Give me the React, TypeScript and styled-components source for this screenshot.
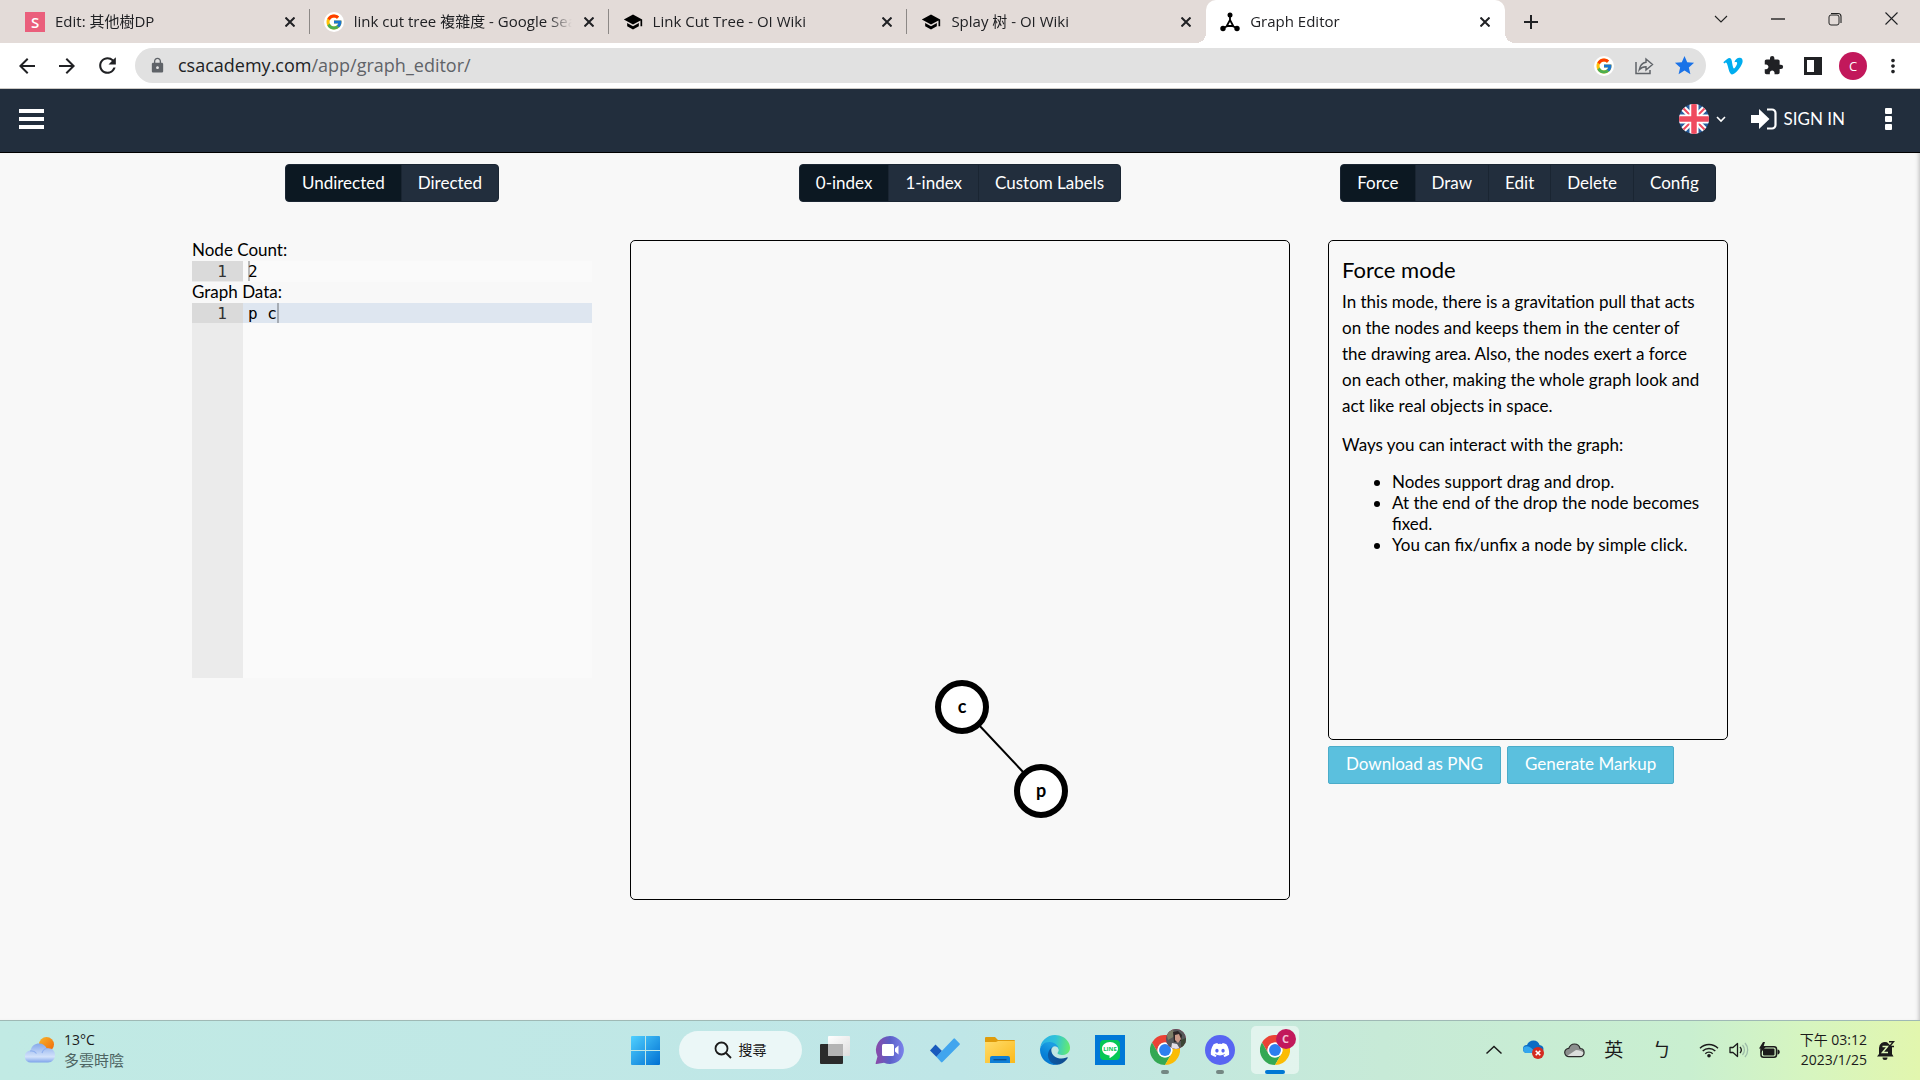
import React, { useState } from 'react'
import styled, { createGlobalStyle, css } from 'styled-components'
import { FaDiscord, FaVimeoV } from 'react-icons/fa'
import { FcGoogle } from 'react-icons/fc'
import {
  MdArrowBack,
  MdArrowForward,
  MdExtension,
  MdLock,
  MdMoreVert,
  MdRefresh,
  MdSchool,
  MdStar,
} from 'react-icons/md'

type Tab = {
  id: string
  title: string
  icon: React.ReactNode
}

type GraphNode = {
  label: string
  x: number
  y: number
}

const TABS: Tab[] = [
  { id: 'edit', title: 'Edit: 其他樹DP', icon: <LetterIcon>S</LetterIcon> },
  {
    id: 'search',
    title: 'link cut tree 複雜度 - Google Search',
    icon: <GoogleIcon />,
  },
  {
    id: 'lct',
    title: 'Link Cut Tree - OI Wiki',
    icon: <MdSchool size={20} color="#000" />,
  },
  {
    id: 'splay',
    title: 'Splay 树 - OI Wiki',
    icon: <MdSchool size={20} color="#000" />,
  },
  { id: 'graph', title: 'Graph Editor', icon: <GraphIcon /> },
]

const NODES: GraphNode[] = [
  { label: 'c', x: 331, y: 466 },
  { label: 'p', x: 410, y: 550 },
]

const DIRECTIONS = ['Undirected', 'Directed']
const LABELS = ['0-index', '1-index', 'Custom Labels']
const MODES = ['Force', 'Draw', 'Edit', 'Delete', 'Config']

export default function App() {
  return (
    <Page>
      <GlobalStyle />
      <TabStrip />
      <AddressBar />
      <SiteHeader />
      <GraphEditor />
      <Taskbar />
    </Page>
  )
}

function TabStrip() {
  const [activeTab, setActiveTab] = useState('graph')
  const activeIndex = TABS.findIndex(tab => tab.id === activeTab)

  return (
    <Strip>
      <TabList>
        {TABS.map((tab, index) => (
          <TabItem
            key={tab.id}
            $active={tab.id === activeTab}
            $divider={index !== activeIndex && index + 1 !== activeIndex}
          >
            <TabButton type="button" onClick={() => setActiveTab(tab.id)}>
              <Favicon>{tab.icon}</Favicon>
              <TabTitle>{tab.title}</TabTitle>
            </TabButton>
            <TabClose type="button" aria-label={`Close ${tab.title}`}>
              <CrossIcon size={10} width={2} />
            </TabClose>
          </TabItem>
        ))}
      </TabList>
      <NewTab type="button" aria-label="New tab">
        <svg width="16" height="16" viewBox="0 0 16 16">
          <path d="M8 1v14M1 8h14" stroke="#202124" strokeWidth="2" />
        </svg>
      </NewTab>
      <WindowControls>
        <WindowButton type="button" aria-label="Search tabs">
          <svg width="14" height="8" viewBox="0 0 14 8" fill="none">
            <path d="M1 1l6 6 6-6" stroke="#222" strokeWidth="1.1" />
          </svg>
        </WindowButton>
        <WindowButton type="button" aria-label="Minimize">
          <svg width="14" height="2" viewBox="0 0 14 2">
            <path d="M0 1h14" stroke="#222" strokeWidth="1.4" />
          </svg>
        </WindowButton>
        <WindowButton type="button" aria-label="Restore">
          <svg width="14" height="14" viewBox="0 0 14 14" fill="none">
            <rect x="1" y="3" width="10" height="10" rx="2" stroke="#222" />
            <path
              d="M3 1.5h7a3 3 0 0 1 3 3V11"
              stroke="#222"
              strokeWidth="1.1"
            />
          </svg>
        </WindowButton>
        <WindowButton type="button" aria-label="Close window">
          <CrossIcon size={13} width={1.1} />
        </WindowButton>
      </WindowControls>
    </Strip>
  )
}

function AddressBar() {
  return (
    <Toolbar>
      <NavButtons>
        <IconButton type="button" aria-label="Back">
          <MdArrowBack size={24} />
        </IconButton>
        <IconButton type="button" aria-label="Forward">
          <MdArrowForward size={24} />
        </IconButton>
        <IconButton type="button" aria-label="Reload">
          <MdRefresh size={25} />
        </IconButton>
      </NavButtons>
      <UrlField>
        <MdLock size={17} color="#5f6368" />
        <Url href="#graph_editor">
          csacademy.com<UrlPath>/app/graph_editor/</UrlPath>
        </Url>
        <UrlActions>
          <IconButton type="button" aria-label="Search with Google">
            <GoogleIcon />
          </IconButton>
          <IconButton type="button" aria-label="Share">
            <svg width="20" height="20" viewBox="0 0 20 20" fill="none">
              <path d="M2 6v11.5h14V14" stroke="#5f6368" strokeWidth="1.5" />
              <path
                d="M12 3l6.5 5.5L12 14v-3.200c-3 0-5 .9-6.800 3C6 9.500 8.300 6.900 12 6.300z"
                stroke="#5f6368"
                strokeWidth="1.4"
              />
            </svg>
          </IconButton>
          <IconButton type="button" aria-label="Bookmark">
            <MdStar size={23} color="#1a73e8" />
          </IconButton>
        </UrlActions>
      </UrlField>
      <Extensions>
        <IconButton type="button" aria-label="Vimeo">
          <FaVimeoV size={22} color="#00adef" />
        </IconButton>
        <IconButton type="button" aria-label="Extensions">
          <MdExtension size={21} />
        </IconButton>
        <IconButton type="button" aria-label="Side panel">
          <svg width="18" height="18" viewBox="0 0 18 18">
            <path fill="#202124" d="M0 0h18v18H0zM3 3v12h7V3z" />
          </svg>
        </IconButton>
        <Avatar type="button">C</Avatar>
        <IconButton type="button" aria-label="Browser menu">
          <MdMoreVert size={22} />
        </IconButton>
      </Extensions>
    </Toolbar>
  )
}

function SiteHeader() {
  return (
    <Header>
      <HeaderButton type="button" aria-label="Menu">
        <svg width="25" height="20" viewBox="0 0 25 20">
          <path fill="#fff" d="M0 0h25v4H0zM0 8h25v4H0zM0 16h25v4H0z" />
        </svg>
      </HeaderButton>
      <HeaderActions>
        <HeaderButton type="button" aria-label="Language">
          <FlagIcon />
          <svg width="10" height="7" viewBox="0 0 10 7" fill="none">
            <path d="M1 1l4 4 4-4" stroke="#fff" strokeWidth="1.6" />
          </svg>
        </HeaderButton>
        <HeaderButton type="button">
          <svg width="26" height="22" viewBox="0 0 26 22">
            <path fill="#fff" d="M0 7h8V1l10.500 10L8 21v-6H0z" />
            <path
              d="M16 1.500h5a3.500 3.500 0 0 1 3.500 3.500v12a3.500 3.500 0 0 1-3.500 3.500h-5"
              fill="none"
              stroke="#fff"
              strokeWidth="2.2"
            />
          </svg>
          <SignIn>SIGN IN</SignIn>
        </HeaderButton>
        <MoreButton type="button" aria-label="More">
          <svg width="7" height="22" viewBox="0 0 7 22" fill="#fff">
            <rect width="7" height="6" rx="1" />
            <rect y="8" width="7" height="6" rx="1" />
            <rect y="16" width="7" height="6" rx="1" />
          </svg>
        </MoreButton>
      </HeaderActions>
    </Header>
  )
}

function GraphEditor() {
  const [nodeCount, setNodeCount] = useState('2')
  const [graphData, setGraphData] = useState('p c')
  const [from, to] = NODES

  return (
    <Main>
      <Columns>
        <ToggleGroup options={DIRECTIONS} />
        <ToggleGroup options={LABELS} />
        <ToggleGroup options={MODES} />

        <section>
          <EditorLabel htmlFor="node-count">Node Count:</EditorLabel>
          <Editor>
            <Gutter>
              <LineNumber>1</LineNumber>
            </Gutter>
            <Lines>
              <CodeInput
                id="node-count"
                rows={1}
                value={nodeCount}
                onChange={event => setNodeCount(event.target.value)}
              />
              <Caret $column={0} />
            </Lines>
          </Editor>
          <EditorLabel htmlFor="graph-data">Graph Data:</EditorLabel>
          <Editor $tall>
            <Gutter>
              <LineNumber>1</LineNumber>
            </Gutter>
            <Lines $focused>
              <CodeInput
                id="graph-data"
                value={graphData}
                onChange={event => setGraphData(event.target.value)}
              />
              <Caret $column={3} />
            </Lines>
          </Editor>
        </section>

        <Canvas viewBox="0 0 658 658">
          <line
            x1={from.x}
            y1={from.y}
            x2={to.x}
            y2={to.y}
            stroke="#000"
            strokeWidth="2"
          />
          {NODES.map(node => (
            <g key={node.label}>
              <circle
                cx={node.x}
                cy={node.y}
                r="24"
                fill="#fff"
                stroke="#000"
                strokeWidth="6"
              />
              <NodeLabel x={node.x} y={node.y + 6}>
                {node.label}
              </NodeLabel>
            </g>
          ))}
        </Canvas>

        <section>
          <HelpPanel>
            <HelpTitle>Force mode</HelpTitle>
            <HelpText>
              In this mode, there is a gravitation pull that acts on the nodes
              and keeps them in the center of the drawing area. Also, the nodes
              exert a force on each other, making the whole graph look and act
              like real objects in space.
            </HelpText>
            <HelpText>Ways you can interact with the graph:</HelpText>
            <HelpList>
              <li>Nodes support drag and drop.</li>
              <li>At the end of the drop the node becomes fixed.</li>
              <li>You can fix/unfix a node by simple click.</li>
            </HelpList>
          </HelpPanel>
          <Actions>
            <ActionButton type="button">Download as PNG</ActionButton>
            <ActionButton type="button">Generate Markup</ActionButton>
          </Actions>
        </section>
      </Columns>
    </Main>
  )
}

function ToggleGroup({ options }: { options: string[] }) {
  const [selected, setSelected] = useState(options[0])

  return (
    <Toggle>
      {options.map(option => (
        <ToggleButton
          key={option}
          type="button"
          $active={option === selected}
          onClick={() => setSelected(option)}
        >
          {option}
        </ToggleButton>
      ))}
    </Toggle>
  )
}

function Taskbar() {
  return (
    <Bar>
      <Weather type="button">
        <WeatherIcon />
        <WeatherText>
          <span>13°C</span>
          <Muted>多雲時陰</Muted>
        </WeatherText>
      </Weather>
      <Apps>
        <AppTile type="button" aria-label="Start">
          <WindowsIcon />
        </AppTile>
        <SearchButton type="button">
          <svg width="18" height="18" viewBox="0 0 18 18" fill="none">
            <circle cx="7.5" cy="7.5" r="6" stroke="#1b1b1b" strokeWidth="1.8" />
            <path d="M12 12l5 5" stroke="#1b1b1b" strokeWidth="1.8" />
          </svg>
          搜尋
        </SearchButton>
        <AppTile type="button" aria-label="Task view">
          <TaskViewIcon />
        </AppTile>
        <AppTile type="button" aria-label="Chat">
          <ChatIcon />
        </AppTile>
        <AppTile type="button" aria-label="To Do">
          <TodoIcon />
        </AppTile>
        <AppTile type="button" aria-label="File Explorer">
          <FolderIcon />
        </AppTile>
        <AppTile type="button" aria-label="Edge">
          <EdgeIcon />
        </AppTile>
        <AppTile type="button" aria-label="LINE">
          <LineIcon />
        </AppTile>
        <AppTile type="button" aria-label="Chrome" $running>
          <ChromeIcon />
          <ProfileBadge>
            <PhotoIcon />
          </ProfileBadge>
        </AppTile>
        <AppTile type="button" aria-label="Discord" $running>
          <DiscordCircle>
            <FaDiscord size={20} color="#fff" />
          </DiscordCircle>
        </AppTile>
        <AppTile type="button" aria-label="Chrome, Graph Editor" $active>
          <ChromeIcon />
          <ProfileBadge>C</ProfileBadge>
        </AppTile>
      </Apps>
      <Tray>
        <TrayButton type="button" aria-label="Hidden icons" $width={38}>
          <svg width="18" height="10" viewBox="0 0 18 10" fill="none">
            <path
              d="M1.500 8.500L9 1.500l7.500 7"
              stroke="#1b1b1b"
              strokeWidth="1.5"
            />
          </svg>
        </TrayButton>
        <TrayButton type="button" aria-label="OneDrive" $width={42}>
          <OneDriveIcon />
        </TrayButton>
        <TrayButton type="button" aria-label="Cloud" $width={40}>
          <CloudIcon />
        </TrayButton>
        <TrayButton type="button" $width={38}>
          英
        </TrayButton>
        <TrayButton type="button" $width={58}>
          ㄅ
        </TrayButton>
        <StatusButton type="button" aria-label="Network, sound and battery">
          <WifiIcon />
          <VolumeIcon />
          <BatteryIcon />
        </StatusButton>
        <Clock type="button">
          <span>下午 03:12</span>
          <span>2023/1/25</span>
        </Clock>
        <TrayButton type="button" aria-label="Notifications" $width={38}>
          <BellIcon />
        </TrayButton>
      </Tray>
    </Bar>
  )
}

function CrossIcon({ size, width }: { size: number; width: number }) {
  return (
    <svg width={size} height={size} viewBox={`0 0 ${size} ${size}`}>
      <path
        d={`M0.5 0.5L${size - 0.5} ${size - 0.5}M${size - 0.5} 0.5L0.5 ${size - 0.5}`}
        stroke="#202124"
        strokeWidth={width}
      />
    </svg>
  )
}

function GraphIcon() {
  return (
    <svg width="20" height="20" viewBox="0 0 20 20">
      <path
        d="M10 3v5L6.500 14.500M10 8l3.500 6.500M3 16l5-2h4l5 2"
        fill="none"
        stroke="#000"
        strokeWidth="1.8"
      />
      <circle cx="10" cy="3" r="2.5" />
      <circle cx="3" cy="16.5" r="2.7" />
      <circle cx="17" cy="16.5" r="2.7" />
    </svg>
  )
}

function GoogleIcon() {
  return (
    <GoogleCircle>
      <FcGoogle size={18} />
    </GoogleCircle>
  )
}

function LetterIcon({ children }: { children: string }) {
  return <LetterSquare>{children}</LetterSquare>
}

function FlagIcon() {
  return (
    <svg width="30" height="30" viewBox="0 0 30 30">
      <clipPath id="flag">
        <circle cx="15" cy="15" r="15" />
      </clipPath>
      <g clipPath="url(#flag)">
        <path fill="#2a5f9e" d="M0 0h30v30H0z" />
        <path d="M0 0l30 30M30 0L0 30" stroke="#fff" strokeWidth="6" />
        <path d="M0 0l30 30M30 0L0 30" stroke="#ef4b5f" strokeWidth="2" />
        <path d="M15 0v30M0 15h30" stroke="#fff" strokeWidth="9" />
        <path d="M15 0v30M0 15h30" stroke="#ef4b5f" strokeWidth="5.5" />
      </g>
    </svg>
  )
}

function WeatherIcon() {
  return (
    <svg width="30" height="26" viewBox="0 0 30 26">
      <defs>
        <linearGradient id="sun" x1="0" y1="0" x2="1" y2="1">
          <stop offset="0" stopColor="#f7b52c" />
          <stop offset="1" stopColor="#f0660a" />
        </linearGradient>
        <linearGradient id="cloud" x1="0" y1="0" x2="0" y2="1">
          <stop offset="0" stopColor="#86a9ea" />
          <stop offset="0.7" stopColor="#d3e2fb" />
          <stop offset="1" stopColor="#7da3ea" />
        </linearGradient>
      </defs>
      <circle cx="21.5" cy="7.5" r="7.5" fill="url(#sun)" />
      <path
        d="M6 25.500a6 6 0 0 1-.5-12C6.500 9 10 6.500 14 6.500c4 0 6.500 2 7.700 5 4.800-1 8.300 2.200 8.300 6.500s-3 7.500-7 7.500z"
        fill="url(#cloud)"
      />
      <path
        d="M17 16c1-3.200 3-4.500 5.500-4.500M5 14c3-.5 5 .5 6.500 2.500"
        fill="none"
        stroke="#8fb0ee"
        strokeWidth="1.2"
      />
    </svg>
  )
}

function WindowsIcon() {
  return (
    <svg width="29" height="29" viewBox="0 0 29 29">
      <defs>
        <linearGradient id="win" x1="0" y1="0" x2="1" y2="1">
          <stop offset="0" stopColor="#50d0ff" />
          <stop offset="1" stopColor="#0070d2" />
        </linearGradient>
      </defs>
      <path
        fill="url(#win)"
        d="M1 0h13v14H0V1a1 1 0 0 1 1-1zM15 0h13a1 1 0 0 1 1 1v13H15zM0 15h14v14H1a1 1 0 0 1-1-1zM15 15h14v13a1 1 0 0 1-1 1H15z"
      />
    </svg>
  )
}

function TaskViewIcon() {
  return (
    <svg width="30" height="28" viewBox="0 0 30 28">
      <defs>
        <linearGradient id="paper" x1="0" y1="0" x2="1" y2="1">
          <stop offset="0" stopColor="#fff" />
          <stop offset="1" stopColor="#dedede" />
        </linearGradient>
      </defs>
      <rect y="8" width="23" height="20" rx="1" fill="#2b2b2b" />
      <rect x="8" width="22" height="20" rx="1" fill="url(#paper)" />
      <path fill="#b4b4b4" d="M8 8h15v12H8z" />
    </svg>
  )
}

function ChatIcon() {
  return (
    <svg width="30" height="30" viewBox="0 0 30 30">
      <defs>
        <linearGradient id="chat" x1="0" y1="0" x2="1" y2="0">
          <stop offset="0" stopColor="#8b4aa8" />
          <stop offset="0.5" stopColor="#5b5fc7" />
          <stop offset="1" stopColor="#7b83eb" />
        </linearGradient>
      </defs>
      <path
        fill="url(#chat)"
        d="M15 1a14 14 0 1 1-6 26.700L1.500 29c-.8.100-1-.3-.8-1l1.800-6.500A14 14 0 0 1 15 1z"
      />
      <rect x="7" y="9" width="12" height="12" rx="1.5" fill="#fff" />
      <path fill="#fff" d="M20 13.500l3.500-3v9l-3.500-3z" />
    </svg>
  )
}

function TodoIcon() {
  return (
    <svg width="30" height="25" viewBox="0 0 30 25">
      <path fill="#185abd" d="M0 12.500l5.500-6L12 13l-5.500 6z" />
      <path
        fill="#41a5ee"
        d="M6.300 18.800L23.500.8a1 1 0 0 1 1.500 0l4.600 4.600a1 1 0 0 1 0 1.400L12.500 24a1 1 0 0 1-1.500 0z"
      />
    </svg>
  )
}

function FolderIcon() {
  return (
    <svg width="30" height="26" viewBox="0 0 30 26">
      <defs>
        <linearGradient id="folder" x1="0" y1="0" x2="1" y2="1">
          <stop offset="0" stopColor="#ffdc6b" />
          <stop offset="1" stopColor="#fbb91a" />
        </linearGradient>
      </defs>
      <path
        fill="#df9c0c"
        d="M0 6V1a1 1 0 0 1 1-1h9l3 3h16a1 1 0 0 1 1 1v2z"
      />
      <path fill="url(#folder)" d="M0 5h11l2-1h17v22H0z" />
      <path fill="#0f7fd6" d="M5 26v-5a2 2 0 0 1 2-2h16a2 2 0 0 1 2 2v5z" />
      <path d="M8.500 22.700h13" stroke="#0b4f8f" strokeWidth="1.3" />
    </svg>
  )
}

function EdgeIcon() {
  return (
    <svg width="30" height="30" viewBox="0 0 256 256">
      <defs>
        <linearGradient id="edge-dark" x1="0.2" y1="0.5" x2="1" y2="0.5">
          <stop offset="0" stopColor="#0c59a4" />
          <stop offset="1" stopColor="#114a8b" />
        </linearGradient>
        <linearGradient id="edge-blue" x1="0.6" y1="0.2" x2="0.2" y2="1">
          <stop offset="0" stopColor="#1b9de2" />
          <stop offset="0.5" stopColor="#0883d9" />
          <stop offset="1" stopColor="#0672cb" />
        </linearGradient>
        <linearGradient id="edge-green" x1="0" y1="0.4" x2="1" y2="0.5">
          <stop offset="0" stopColor="#2ab0e5" />
          <stop offset="0.5" stopColor="#2fc3d9" />
          <stop offset="1" stopColor="#66eb6e" />
        </linearGradient>
      </defs>
      <path
        fill="url(#edge-dark)"
        d="M231.070 190.540c-3.380 1.760-6.860 3.310-10.420 4.650a101.200 101.200 0 0 1-35.870 6.390c-47.250 0-88.420-32.500-88.420-74.200.1-11.400 6.400-21.860 16.420-27.300-42.750 1.800-53.740 46.350-53.740 72.460 0 73.810 68.030 81.300 82.690 81.300 7.900 0 19.830-2.300 26.980-4.560l1.310-.44a128.340 128.340 0 0 0 66.610-52.800 4 4 0 0 0-5.560-5.500z"
      />
      <path
        fill="url(#edge-blue)"
        d="M105.730 241.420A79.200 79.200 0 0 1 83 220.080a80.720 80.720 0 0 1 29.500-120c3.120-1.470 8.450-4.130 15.540-4a32.350 32.350 0 0 1 25.690 13 31.880 31.880 0 0 1 6.360 18.660c0-.21 24.460-79.600-80-79.600-43.900 0-80 41.660-80 78.210a130.150 130.150 0 0 0 12.110 56 128 128 0 0 0 156.380 67.110 75.550 75.550 0 0 1-62.780-8z"
      />
      <path
        fill="url(#edge-green)"
        d="M152.330 148.860c-.81 1.050-3.300 2.500-3.300 5.660 0 2.610 1.700 5.120 4.720 7.230 14.380 10 41.490 8.680 41.560 8.680a59.560 59.560 0 0 0 30.270-8.350 61.380 61.380 0 0 0 30.430-52.880c.26-22.410-8-37.310-11.340-43.910C223.460 23.840 177.720.04 128 .04a128 128 0 0 0-128 126.200c.48-36.540 36.800-66.050 80-66.050 3.500 0 23.460.34 42 10.070 16.340 8.580 24.900 18.940 30.850 29.210 6.180 10.670 7.280 24.150 7.280 29.520 0 5.370-2.740 13.330-7.800 19.870z"
      />
    </svg>
  )
}

function LineIcon() {
  return (
    <svg width="30" height="30" viewBox="0 0 30 30">
      <path fill="#0078d7" d="M0 0h30v30H0z" />
      <rect x="5" y="5" width="20" height="20" rx="4" fill="#06c755" />
      <path
        fill="#fff"
        d="M15 7c4.500 0 8 3 8 6.700 0 3.300-4 6.600-8 9.300-.6.300-.5-.3-.4-2.600C10.300 20.200 7 17.400 7 13.700 7 10 10.500 7 15 7z"
      />
      <LineName x="15" y="16">
        LINE
      </LineName>
    </svg>
  )
}

function ChromeIcon() {
  return (
    <svg width="30" height="30" viewBox="0 0 48 48">
      <path
        fill="#ea4335"
        d="M3.200 12A24 24 0 0 1 44.800 12H24a12 12 0 0 0-10.400 18z"
      />
      <path
        fill="#34a853"
        d="M3.200 12l10.400 18a12 12 0 0 0 20.800 0L24 48A24 24 0 0 1 3.200 12z"
      />
      <path
        fill="#fbbc04"
        d="M44.800 12A24 24 0 0 1 24 48l10.400-18A12 12 0 0 0 24 12z"
      />
      <circle cx="24" cy="24" r="12" fill="#fff" />
      <circle cx="24" cy="24" r="9.5" fill="#2d7ff0" />
    </svg>
  )
}

function PhotoIcon() {
  return (
    <svg width="20" height="20" viewBox="0 0 20 20">
      <clipPath id="photo">
        <circle cx="10" cy="10" r="10" />
      </clipPath>
      <g clipPath="url(#photo)">
        <path fill="#56585a" d="M0 0h20v20H0z" />
        <path fill="#7b7f68" d="M0 3l7-2 2 6-7 4z" />
        <path fill="#2c2627" d="M7 3l5-1 4 4-1 6-7 1z" />
        <path fill="#c99a88" d="M9 6l4-1 2 5-3 4-3-3z" />
        <path fill="#e3dfe6" d="M6 14l5 1 3 5H5z" />
        <path fill="#3a4433" d="M15 11l5-2v9l-5 1z" />
      </g>
    </svg>
  )
}

function OneDriveIcon() {
  return (
    <svg width="22" height="20" viewBox="0 0 22 20">
      <path
        fill="#0a6cc4"
        d="M4 13a4 4 0 0 1 0-8c1-3 3.500-4.500 6.500-4.500S16 2.500 16.500 5c2.500.2 4 2 4 4s-1.500 4-4 4z"
      />
      <path fill="#33a6ee" d="M1 7c4-2 8 0 11 6H4C1 13-1 10 1 7z" />
      <circle cx="15" cy="13" r="6" fill="#d42b20" />
      <path
        d="M12.700 10.700l4.600 4.600M17.300 10.700l-4.600 4.600"
        stroke="#fff"
        strokeWidth="1.6"
      />
    </svg>
  )
}

function CloudIcon() {
  return (
    <svg width="21" height="15" viewBox="0 0 21 15">
      <path
        d="M5 13.700a4.200 4.200 0 0 1-.2-8.400C5.800 2.500 7.800 1 10.400 1c3 0 5 1.800 5.700 4.500 2.300.1 4 1.900 4 4.200s-1.800 4-4.100 4z"
        fill="#8c8f8e"
      />
      <path fill="#dcdfdd" d="M3 13l9-6c3 0 6 1 8 3-.5 2.500-2 3.700-4 3.700H5z" />
      <path
        d="M5 13.700a4.200 4.200 0 0 1-.2-8.400C5.800 2.500 7.800 1 10.400 1c3 0 5 1.800 5.700 4.500 2.300.1 4 1.900 4 4.200s-1.800 4-4.100 4z"
        fill="none"
        stroke="#2b2b2b"
        strokeWidth="1.2"
      />
    </svg>
  )
}

function WifiIcon() {
  return (
    <svg width="20" height="16" viewBox="0 0 20 16" fill="none">
      <path
        d="M1 6.200a12.700 12.700 0 0 1 18 0M3.700 9a9 9 0 0 1 12.600 0M6.300 11.700a5.200 5.200 0 0 1 7.400 0"
        stroke="#1b1b1b"
        strokeWidth="1.4"
      />
      <circle cx="10" cy="13.8" r="1.8" fill="#1b1b1b" />
    </svg>
  )
}

function VolumeIcon() {
  return (
    <svg width="20" height="16" viewBox="0 0 20 16" fill="none">
      <path
        d="M1 5.500h3L8.500 1.500v13L4 10.500H1z"
        stroke="#1b1b1b"
        strokeWidth="1.3"
        strokeLinejoin="round"
      />
      <path d="M11 5a4.500 4.500 0 0 1 0 6" stroke="#1b1b1b" strokeWidth="1.3" />
      <path
        d="M13.500 3a7.500 7.500 0 0 1 0 10M16 1a10.500 10.500 0 0 1 0 14"
        stroke="#9dbba9"
        strokeWidth="1.3"
      />
    </svg>
  )
}

function BatteryIcon() {
  return (
    <svg width="21" height="17" viewBox="0 0 21 17">
      <rect
        x="2"
        y="4.7"
        width="15.5"
        height="10.5"
        rx="2.5"
        fill="none"
        stroke="#1b1b1b"
        strokeWidth="1.5"
      />
      <rect x="4" y="6.5" width="11.5" height="7" rx="1" fill="#1b1b1b" />
      <path fill="#1b1b1b" d="M18.500 7.500c3 0 3 5 0 5z" />
      <path fill="#1b1b1b" d="M4 0L0 6.500h2.500L1.500 11 7 4.500H4.500L6 0z" />
    </svg>
  )
}

function BellIcon() {
  return (
    <svg width="18" height="20" viewBox="0 0 18 20">
      <path
        fill="#1b1b1b"
        d="M2 14V8a6 6 0 0 1 8-5.700L15 7v7l1.500 2.500H0zM5.500 17.500h5a2.500 2.500 0 0 1-5 0z"
      />
      <path
        d="M5.500 6.500h5l-5 6h5.500"
        fill="none"
        stroke="#dcf5b8"
        strokeWidth="1.5"
      />
      <path
        d="M12 1.700h4.500L12.500 6.500H17"
        fill="none"
        stroke="#1b1b1b"
        strokeWidth="1.4"
      />
    </svg>
  )
}

const GlobalStyle = createGlobalStyle`
  *,
  *::before,
  *::after {
    box-sizing: border-box;
  }

  body {
    margin: 0;
    background-color: #f8f8f8;
    color: #000;
    font-family: Lato, 'Noto Sans CJK TC', sans-serif;
    font-size: 17px;
    line-height: 21px;
  }

  button {
    border: none;
    padding: 0;
    background: none;
    color: inherit;
    font: inherit;
    cursor: pointer;
  }

  svg {
    display: block;
    flex: none;
  }
`

const systemFont = css`
  font-family: 'Open Sans', 'Noto Sans CJK TC', sans-serif;
`

const Page = styled.div`
  display: flex;
  flex-direction: column;
  min-height: 100vh;
`

const Strip = styled.div`
  display: flex;
  align-items: center;
  height: 43px;
  padding-left: 11px;
  background-color: #e3dbd8;
  color: #202124;
  ${systemFont}
  font-size: 15px;
`

const TabList = styled.div`
  display: flex;
  flex: 0 1 1494px;
  min-width: 0;
  height: 100%;
`

const TabItem = styled.div<{ $active: boolean; $divider: boolean }>`
  position: relative;
  display: flex;
  flex: 1 1 0;
  align-items: center;
  min-width: 0;
  padding: 0 13px;
  border-radius: 10px 10px 0 0;

  ${({ $divider }) =>
    $divider &&
    css`
      &::after {
        content: '';
        position: absolute;
        right: 0;
        width: 1px;
        height: 25px;
        background-color: #8c8886;
      }
    `}

  /* the flared feet of the selected tab */
  ${({ $active }) =>
    $active &&
    css`
      background-color: #fff;

      &::before,
      &::after {
        content: '';
        position: absolute;
        bottom: 0;
        width: 10px;
        height: 10px;
      }
      &::before {
        left: -10px;
        background: radial-gradient(circle at 0 0, transparent 10px, #fff 10px);
      }
      &::after {
        right: -10px;
        background: radial-gradient(
          circle at 100% 0,
          transparent 10px,
          #fff 10px
        );
      }
    `}
`

const TabButton = styled.button`
  display: flex;
  flex: 1;
  gap: 9px;
  align-items: center;
  min-width: 0;
  text-align: left;
`

const Favicon = styled.span`
  display: flex;
  flex: none;
  justify-content: center;
  width: 22px;
`

const LetterSquare = styled.span`
  width: 20px;
  height: 20px;
  background-color: #ea5f7c;
  color: #fff;
  font-size: 15px;
  font-weight: 600;
  line-height: 20px;
  text-align: center;
`

const GoogleCircle = styled.span`
  display: flex;
  align-items: center;
  justify-content: center;
  width: 20px;
  height: 20px;
  border-radius: 50%;
  background-color: #fff;
`

const TabTitle = styled.span`
  flex: 1;
  margin-right: 10px;
  overflow: hidden;
  white-space: nowrap;
  mask-image: linear-gradient(to left, transparent, #000 24px);
`

const TabClose = styled.button`
  display: grid;
  place-items: center;
  width: 14px;
  height: 20px;
`

const NewTab = styled.button`
  display: grid;
  flex: none;
  place-items: center;
  width: 52px;
  height: 36px;
`

const WindowControls = styled.div`
  display: flex;
  align-self: flex-start;
  margin-left: auto;
`

const WindowButton = styled.button`
  display: grid;
  place-items: center;
  width: 57px;
  height: 37px;
`

const Toolbar = styled.div`
  display: flex;
  align-items: center;
  height: 46px;
  padding-left: 7px;
  border-bottom: 1px solid #ccc9c5;
  background-color: #fff;
  color: #202124;
  ${systemFont}
`

const NavButtons = styled.div`
  display: flex;
  margin-right: 8px;
`

const IconButton = styled.button`
  display: grid;
  place-items: center;
  width: 40px;
  height: 36px;
`

const UrlField = styled.div`
  display: flex;
  flex: 1;
  align-items: center;
  height: 35px;
  padding: 0 2px 0 14px;
  border-radius: 18px;
  background-color: #e1e1e1;
`

const Url = styled.a`
  flex: 1;
  margin-left: 12px;
  color: #202124;
  font-size: 18px;
  text-decoration: none;
`

const UrlPath = styled.span`
  color: #5f6368;
`

const UrlActions = styled.div`
  display: flex;
`

const Extensions = styled.div`
  display: flex;
  align-items: center;
  padding: 0 7px;
`

const Avatar = styled.button`
  width: 28px;
  height: 28px;
  margin: 0 6px;
  border-radius: 50%;
  background-color: #c2185b;
  color: #fff;
  font-size: 13px;
  line-height: 28px;
`

const Header = styled.header`
  display: flex;
  align-items: center;
  justify-content: space-between;
  height: 64px;
  padding: 0 28px 3px 19px;
  border-bottom: 1px solid #000;
  background-color: #222e3d;
  color: #fff;
`

const HeaderActions = styled.div`
  display: flex;
  gap: 25px;
  align-items: center;
`

const HeaderButton = styled.button`
  display: flex;
  gap: 7px;
  align-items: center;
`

const SignIn = styled.span`
  padding-bottom: 2px;
`

const MoreButton = styled(HeaderButton)`
  margin-left: 15px;
`

const Main = styled.main`
  flex: 1;
  padding: 11px 10%;
  box-shadow: inset -4px 0 4px -3px #bbb;
`

const Columns = styled.div`
  display: grid;
  grid-template-columns:
    minmax(0, 400fr) minmax(0, 660fr) minmax(0, 400fr);
  gap: 38px;
  align-items: start;
`

const Toggle = styled.div`
  display: flex;
  justify-self: center;
  border: 1px solid #1b2633;
  border-radius: 4px;
  background-color: #222e3d;
  color: #fff;
  overflow: hidden;
`

const ToggleButton = styled.button<{ $active: boolean }>`
  height: 36px;
  padding: 0 16px 2px;
  background-color: ${({ $active }) => ($active ? '#0c1822' : 'transparent')};
  white-space: nowrap;

  & + & {
    border-left: 1px solid #1a2532;
  }
`

const EditorLabel = styled.label`
  display: block;
  height: 21px;
  line-height: 19px;
`

const Editor = styled.div<{ $tall?: boolean }>`
  display: flex;
  height: ${({ $tall }) => ($tall ? '375px' : '21px')};
  background-color: #fafafa;
  font-family: 'DejaVu Sans Mono', monospace;
  font-size: 16px;
  line-height: 22px;
`

const Gutter = styled.div`
  width: 51px;
  background-color: #ebebeb;
`

const LineNumber = styled.div`
  height: 20px;
  padding-right: 16px;
  background-color: #dadada;
  color: #333;
  text-align: right;
`

const Lines = styled.div<{ $focused?: boolean }>`
  position: relative;
  flex: 1;
  min-width: 0;
  background: ${({ $focused }) =>
    $focused
      ? 'linear-gradient(#dee6f0, #dee6f0) top / 100% 20px no-repeat'
      : 'none'};
`

const CodeInput = styled.textarea`
  display: block;
  width: 100%;
  height: 100%;
  padding: 0 5px;
  border: none;
  background: transparent;
  color: #000;
  font: inherit;
  overflow: hidden;
  resize: none;

  &:focus {
    outline: none;
  }
`

const Caret = styled.span<{ $column: number }>`
  position: absolute;
  top: 0;
  left: calc(5px + ${({ $column }) => $column}ch);
  width: 2px;
  height: 20px;
  background-color: #000;
  opacity: 0.25;
`

const Canvas = styled.svg`
  width: 100%;
  border: 1px solid #000;
  border-radius: 5px;
`

const NodeLabel = styled.text`
  font-size: 18px;
  font-weight: bold;
  text-anchor: middle;
`

const HelpPanel = styled.div`
  min-height: 500px;
  padding: 17px 23px 17px 13px;
  border: 1px solid #000;
  border-radius: 5px;
`

const HelpTitle = styled.h3`
  margin: 0 0 7px;
  font-size: 22px;
  font-weight: normal;
  line-height: 24px;
`

const HelpText = styled.p`
  margin: 0 0 13px;
  line-height: 26px;
`

const HelpList = styled.ul`
  margin: 0;
  padding-left: 50px;
`

const Actions = styled.div`
  display: flex;
  flex-wrap: wrap;
  gap: 6px;
  margin-top: 6px;
`

const ActionButton = styled.button`
  height: 38px;
  padding: 0 17px 3px;
  border: 1px solid #4bacc9;
  border-radius: 2px;
  background-color: #5bc0de;
  color: #fff;
`

const Bar = styled.footer`
  display: grid;
  grid-template-columns: 1fr auto 1fr;
  align-items: center;
  height: 60px;
  padding-bottom: 1px;
  border-top: 1px solid #9fb9b5;
  background: linear-gradient(
    90deg,
    #c1eae4,
    #bfe6e7 50%,
    #c7ead7 72%,
    #c9efd0 88%,
    #d6f5c0 94%,
    #e2f6ae
  );
  color: #1b1b1b;
  ${systemFont}
  font-size: 14px;
  line-height: 20px;
`

const Weather = styled.button`
  display: flex;
  gap: 9px;
  align-items: center;
  padding-left: 25px;
`

const WeatherText = styled.span`
  display: flex;
  flex-direction: column;
  text-align: left;
`

const Muted = styled.span`
  color: #4d6462;
  font-size: 15px;
`

const Apps = styled.div`
  display: flex;
  gap: 7px;
  align-items: center;
`

const AppTile = styled.button<{ $running?: boolean; $active?: boolean }>`
  position: relative;
  display: grid;
  place-items: center;
  width: 48px;
  height: 48px;
  border-radius: 5px;
  background-color: ${({ $active }) =>
    $active ? 'rgba(255, 255, 255, 0.5)' : 'transparent'};

  ${({ $running, $active }) =>
    ($running || $active) &&
    css`
      &::after {
        content: '';
        position: absolute;
        bottom: 0;
        width: ${$active ? '20px' : '8px'};
        height: 4px;
        border-radius: 2px;
        background-color: ${$active ? '#0078d4' : '#748783'};
      }
    `}
`

const SearchButton = styled.button`
  display: flex;
  gap: 7px;
  align-items: center;
  justify-content: center;
  width: 123px;
  height: 38px;
  margin: 0 2px;
  border-radius: 19px;
  background-color: #ebf7f7;
`

const LineName = styled.text`
  fill: #06c755;
  font-size: 6px;
  font-weight: bold;
  text-anchor: middle;
`

const DiscordCircle = styled.span`
  display: grid;
  place-items: center;
  width: 30px;
  height: 30px;
  border-radius: 50%;
  background-color: #5865f2;
`

const ProfileBadge = styled.span`
  position: absolute;
  top: 3px;
  right: 3px;
  width: 20px;
  height: 20px;
  border-radius: 50%;
  background-color: #c2185b;
  color: #f3c4d6;
  font-size: 11px;
  font-weight: bold;
  text-align: center;
`

const Tray = styled.div`
  display: flex;
  align-items: center;
  justify-content: flex-end;
  padding-right: 15px;
`

const TrayButton = styled.button<{ $width: number }>`
  display: grid;
  place-items: center;
  width: ${({ $width }) => $width}px;
  height: 40px;
  font-size: 19px;
`

const StatusButton = styled.button`
  display: flex;
  gap: 10px;
  align-items: center;
  padding: 0 8px;
`

const Clock = styled.button`
  display: flex;
  flex-direction: column;
  align-items: flex-end;
  margin-left: 12px;
  white-space: nowrap;
`
